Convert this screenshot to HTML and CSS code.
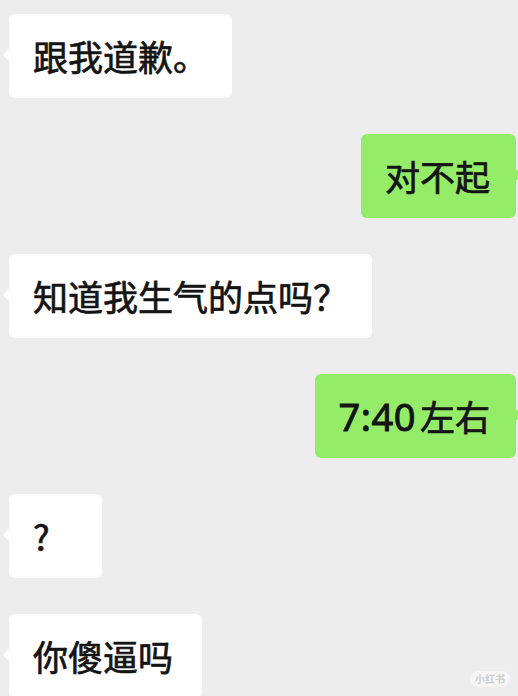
FILE: index.html
```html
<!DOCTYPE html>
<html lang="zh-CN">
<head>
<meta charset="utf-8">
<title>聊天</title>
<link rel="stylesheet" href="styles.css">
</head>
<body>
<div class="chat">
  <div class="bubble in">跟我道歉。</div>
  <div class="bubble out">对不起</div>
  <div class="bubble in">知道我生气的点吗？</div>
  <div class="bubble out"><span class="num">7:40</span>左右</div>
  <div class="bubble in short">?</div>
  <div class="bubble in wide">你傻逼吗</div>
</div>
<div class="watermark">小红书</div>
</body>
</html>
```

FILE: styles.css
```css
html, body {
  margin: 0;
  padding: 0;
  background: #ededed;
  height: 696px;
  overflow: hidden;
}

body {
  position: relative;
  font-family: "Noto Sans CJK SC", "Noto Sans", sans-serif;
}

.chat {
  display: flex;
  flex-direction: column;
  gap: 36px;
  padding: 14px 2px 0 9px;
}

.bubble {
  position: relative;
  box-sizing: border-box;
  height: 84px;
  padding: 20px 24px;
  font-size: 35px;
  line-height: 44px;
  font-weight: 400;
  -webkit-text-stroke: 0.7px #141414;
  color: #141414;
  border-radius: 6px;
  white-space: nowrap;
}

.num {
  font-family: "Noto Sans", sans-serif;
  font-size: 38px;
  letter-spacing: 0.5px;
  margin-right: 4px;
  -webkit-text-stroke: 0.9px #141414;
}

.bubble.in {
  align-self: flex-start;
  background: #ffffff;
}

.bubble.short {
  min-width: 93px;
}

.bubble.wide {
  padding-right: 29px;
}

.bubble.out {
  align-self: flex-end;
  background: #95ec69;
  padding-right: 26px;
}

.bubble.in::before {
  content: "";
  position: absolute;
  left: -6px;
  top: 35px;
  border-style: solid;
  border-width: 6px 6px 6px 0;
  border-color: transparent #ffffff transparent transparent;
}

.bubble.out::after {
  content: "";
  position: absolute;
  right: -6px;
  top: 35px;
  border-style: solid;
  border-width: 6px 0 6px 6px;
  border-color: transparent transparent transparent #95ec69;
}

.watermark {
  position: absolute;
  right: 8px;
  bottom: 9px;
  padding: 1px 5px;
  border-radius: 9px;
  background: rgba(255, 255, 255, 0.45);
  color: rgba(200, 200, 200, 0.9);
  font-size: 10px;
  line-height: 14px;
  font-weight: 700;
}
```
